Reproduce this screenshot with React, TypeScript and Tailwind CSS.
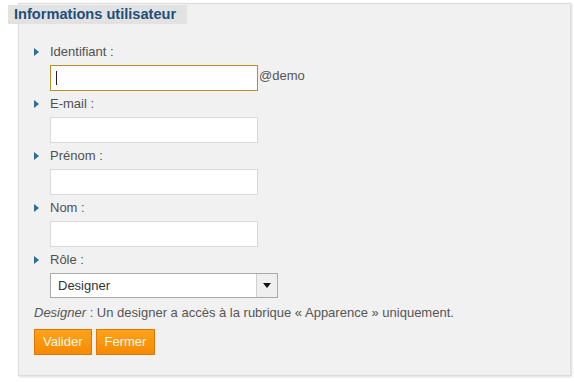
import React from "react";

const Arrow = () => (
  <svg width="5" height="8" viewBox="0 0 5 8" className="shrink-0">
    <path d="M0 0 L5 4 L0 8 Z" fill="#2e6c99" />
  </svg>
);

const Field = ({ label, children }: { label: string; children: React.ReactNode }) => (
  <div className="flex flex-col">
    <div className="flex items-center h-[16px] pl-[15px] gap-[11px]">
      <Arrow />
      <span>{label}</span>
    </div>
    <div className="pl-[31px] mt-[5px] flex items-end">{children}</div>
  </div>
);

export default function App() {
  return (
    <div
      className="w-[574px] h-[382px] bg-white relative text-[13px] text-[#505050]"
      style={{ fontFamily: '"Liberation Sans", Arial, sans-serif' }}
    >
      <div className="absolute left-[18px] top-[3px] w-[553px] h-[373px] bg-[#f1f1f1] border border-[#dcdcdc] shadow-[1px_1px_2px_rgba(0,0,0,0.15)]">
        <div className="pt-[40px] flex flex-col gap-[5px]">
          <Field label="Identifiant :">
            <div className="w-[208px] h-[26px] bg-white border border-[#b8902a] flex items-center pl-[5px]">
              <div className="w-px h-[14px] bg-[#222]" />
            </div>
            <span className="ml-px mb-[6px] text-[#555]">@demo</span>
          </Field>
          <Field label="E-mail :">
            <div className="w-[208px] h-[26px] bg-white border border-[#dadada]" />
          </Field>
          <Field label="Prénom :">
            <div className="w-[208px] h-[26px] bg-white border border-[#dadada]" />
          </Field>
          <Field label="Nom :">
            <div className="w-[208px] h-[26px] bg-white border border-[#dadada]" />
          </Field>
          <Field label="Rôle :">
            <div className="w-[228px] h-[25px] bg-white border border-[#a9a9a9] flex items-center">
              <span className="flex-1 pl-[7px] text-[#333]">Designer</span>
              <div className="w-[21px] h-full border-l border-[#cfcfcf] bg-[#efefef] flex items-center justify-center">
                <svg width="8" height="5" viewBox="0 0 8 5">
                  <path d="M0 0 L8 0 L4 5 Z" fill="#111" />
                </svg>
              </div>
            </div>
          </Field>
        </div>
        <div className="pl-[15px] mt-[7px] leading-[16px] text-[#555]">
          <i>Designer</i> : Un designer a accès à la rubrique « Apparence » uniquement.
        </div>
        <div className="pl-[15px] mt-[8px] flex gap-[4px]">
          <button className="h-[26px] px-[8px] text-[#fff8ee] bg-gradient-to-b from-[#ffa21a] to-[#f58a00] border border-[#e07800]">
            Valider
          </button>
          <button className="h-[26px] px-[8px] text-[#fff8ee] bg-gradient-to-b from-[#ffa21a] to-[#f58a00] border border-[#e07800]">
            Fermer
          </button>
        </div>
      </div>
      <div className="absolute left-[8px] top-[5px] h-[19px] w-[179px] bg-[#e2e2e2] flex items-center pl-[6px] text-[14.6px] font-bold text-[#1f4e79]">
        Informations utilisateur
      </div>
    </div>
  );
}
